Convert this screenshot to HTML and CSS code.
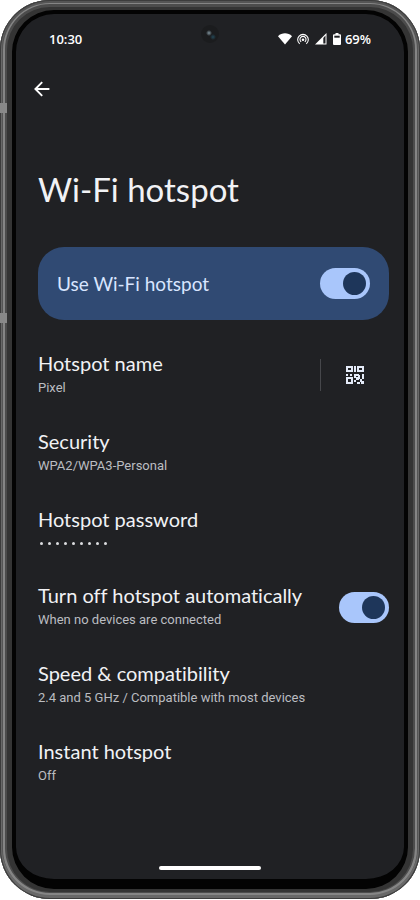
FILE: index.html
```html
<!DOCTYPE html>
<html lang="en">
<head>
<meta charset="utf-8">
<meta name="viewport" content="width=device-width, initial-scale=1">
<title>Wi-Fi hotspot</title>
<link rel="stylesheet" href="styles.css">
</head>
<body>
<div class="phone">
  <span class="band band-upper"></span>
  <span class="band band-lower"></span>
  <div class="screen">
    <span class="camera"></span>
    <header class="status">
      <time>10:30</time>
      <div class="status-icons">
        <svg width="14" height="12" viewBox="0 0 14 12" fill="#fff" aria-hidden="true"><path d="M0 3.200C3.800-.6 10.200-.6 14 3.200L7 11.500Z"/></svg>
        <svg class="cast" width="12" height="12" viewBox="0 0 12 12" fill="none" stroke="#fff" stroke-width="1.100" aria-hidden="true"><path d="M2.700 10.800a5.300 5.300 0 1 1 6.600 0M4.200 8.800a3 3 0 1 1 3.600 0"/><circle cx="6" cy="6.700" r="1.300" fill="#fff" stroke="none"/></svg>
        <svg class="signal" width="12" height="12" viewBox="0 0 12 12" aria-hidden="true"><path d="M0 11.500 11.500 0v11.500Z" fill="#fff"/><path d="M8.300 5v5.500h2.200V2.600Z" fill="#202124"/></svg>
        <svg class="battery" width="8" height="12" viewBox="0 0 8 12" aria-hidden="true"><path d="M2.500 0h3v1.200H7q1 0 1 1V11q0 1-1 1H1q-1 0-1-1V2.200q0-1 1-1h1.500Z" fill="#fff"/><path d="M1.300 2.700h5.400v2H1.300Z" fill="#202124"/></svg>
        <span>69%</span>
      </div>
    </header>
    <nav>
      <button class="back" type="button" aria-label="Back"><svg width="16" height="16" viewBox="0 0 16 16" fill="none" stroke="#fff" stroke-width="1.900" aria-hidden="true"><path d="M15.400 8H2M8.200 1.200 1.400 8l6.800 6.800"/></svg></button>
    </nav>
    <main>
      <h1>Wi-Fi hotspot</h1>
      <div class="banner">
        <label for="use">Use Wi-Fi hotspot</label>
        <input class="switch" type="checkbox" role="switch" id="use" checked>
      </div>
      <ul class="settings">
        <li><div class="text"><h2>Hotspot name</h2><p>Pixel</p></div>
          <div class="qr-cell"><button class="qr" type="button" aria-label="Share QR code"><svg width="18" height="18" viewBox="0 0 18 18" fill="#e4ebf8" aria-hidden="true"><path fill-rule="evenodd" d="M0 0h7v6H0ZM2 2v2h3V2ZM11 0h7v6h-7ZM13 2v2h3V2ZM0 11h7v7H0ZM2 13v3h3v-3Z"/><path d="M8 0h2v6H8ZM0 8h2v2H0ZM4 8h2v2H4ZM8 8h5v2h-3v2H8ZM16 8h2v5h-2ZM12 9h2v4h-2ZM10 11h3v3h-3ZM8 14h2v2H8ZM11 16h3v2h-3ZM14 13h2v3h-2ZM16 15h2v3h-3v-2h1Z"/></svg></button></div></li>
        <li><div class="text"><h2>Security</h2><p>WPA2/WPA3-Personal</p></div></li>
        <li><div class="text"><h2>Hotspot password</h2><p class="dots" aria-label="Hidden"><i></i><i></i><i></i><i></i><i></i><i></i><i></i><i></i><i></i></p></div></li>
        <li><div class="text"><h2><label for="auto">Turn off hotspot automatically</label></h2><p>When no devices are connected</p></div>
          <input class="switch" type="checkbox" role="switch" id="auto" checked></li>
        <li><div class="text"><h2>Speed &amp; compatibility</h2><p>2.4 and 5 GHz / Compatible with most devices</p></div></li>
        <li><div class="text"><h2>Instant hotspot</h2><p>Off</p></div></li>
      </ul>
    </main>
    <div class="home"></div>
  </div>
</div>
</body>
</html>
```
FILE: styles.css
```css
* { box-sizing: border-box; }
body { margin: 0; padding-bottom: 1px; background: #fff; color: #f1f2f5; font-family: Lato, sans-serif; font-variant-ligatures: none; }
h1, h2, p, ul { margin: 0; padding: 0; font-weight: 400; }
button { padding: 0; border: 0; background: none; display: flex; cursor: pointer; }
svg { display: block; }

.phone {
  position: relative;
  display: flex;
  min-height: calc(100vh - 1px);
  padding: 10px 12px;
  border-radius: 50px;
  background: #343434;
  box-shadow: inset 0 0 0 1px #3c3c3c, inset 0 -2px 0 2px #686868, inset 0 0 0 3px #555, inset 0 -1px 0 5px #858585, inset 0 0 0 7px #4c4c4c;
}
.band { position: absolute; left: 0; width: 7px; height: 10px; background: #898989; }
.band-upper { top: 103px; }
.band-lower { top: 313px; }

.screen {
  position: relative;
  flex: 1;
  display: flex;
  flex-direction: column;
  border: 4px solid #030303;
  border-bottom-width: 10px;
  border-radius: 42px;
  background: #202124;
}
.camera {
  position: absolute;
  top: 11px;
  left: 50%;
  width: 18px;
  height: 18px;
  margin-left: -9px;
  border-radius: 50%;
  background: radial-gradient(circle at 8px 8px, #80949e 0, transparent 3px), radial-gradient(circle at 12px 12px, #234858 0, transparent 3px), #1b1c1e;
}

.status {
  display: flex;
  justify-content: space-between;
  align-items: center;
  height: 20px;
  margin-top: 15px;
  padding: 0 33px;
  color: #fff;
  font: 600 13px/20px "Open Sans", sans-serif;
}
.status-icons { display: flex; align-items: center; }
.cast { margin-left: 5px; }
.signal { margin-left: 6px; }
.battery { margin: 0 4px 0 6px; }

nav { padding: 32px 18px 0; }

main { padding: 71px 15px 0 22px; }
h1 { font-size: 33px; line-height: 42px; }
.banner {
  display: flex;
  align-items: center;
  justify-content: space-between;
  height: 73px;
  margin-top: 37px;
  padding: 0 19px;
  border-radius: 26px;
  background: #304a73;
  color: #d8e5ff;
  font-size: 19px;
}
.switch {
  appearance: none;
  flex: none;
  display: flex;
  align-items: center;
  justify-content: flex-end;
  width: 50px;
  height: 31px;
  margin: 0;
  padding: 0 4px;
  border-radius: 16px;
  background: #a9c6fb;
}
.switch::before { content: ""; width: 23px; height: 23px; border-radius: 50%; background: #1e365a; }
.switch:not(:checked) { justify-content: flex-start; }

.settings { display: flex; flex-direction: column; gap: 30px; margin-top: 31px; list-style: none; }
.settings li { display: flex; align-items: center; justify-content: space-between; }
h2 { padding-bottom: 2px; font-size: 20px; line-height: 24px; }
p { color: #bbbdc1; font: 13px/22px Roboto, sans-serif; }
.dots { display: flex; align-items: center; gap: 5px; height: 20px; padding-left: 2px; }
.dots i { width: 3px; height: 3px; border-radius: 50%; background: #dcdde0; }
.qr-cell { display: flex; align-items: center; height: 32px; padding: 0 25px; border-left: 1px solid #46474b; }

.home { width: 102px; height: 4px; margin: auto auto 9px; border-radius: 2px; background: #fff; }
```
